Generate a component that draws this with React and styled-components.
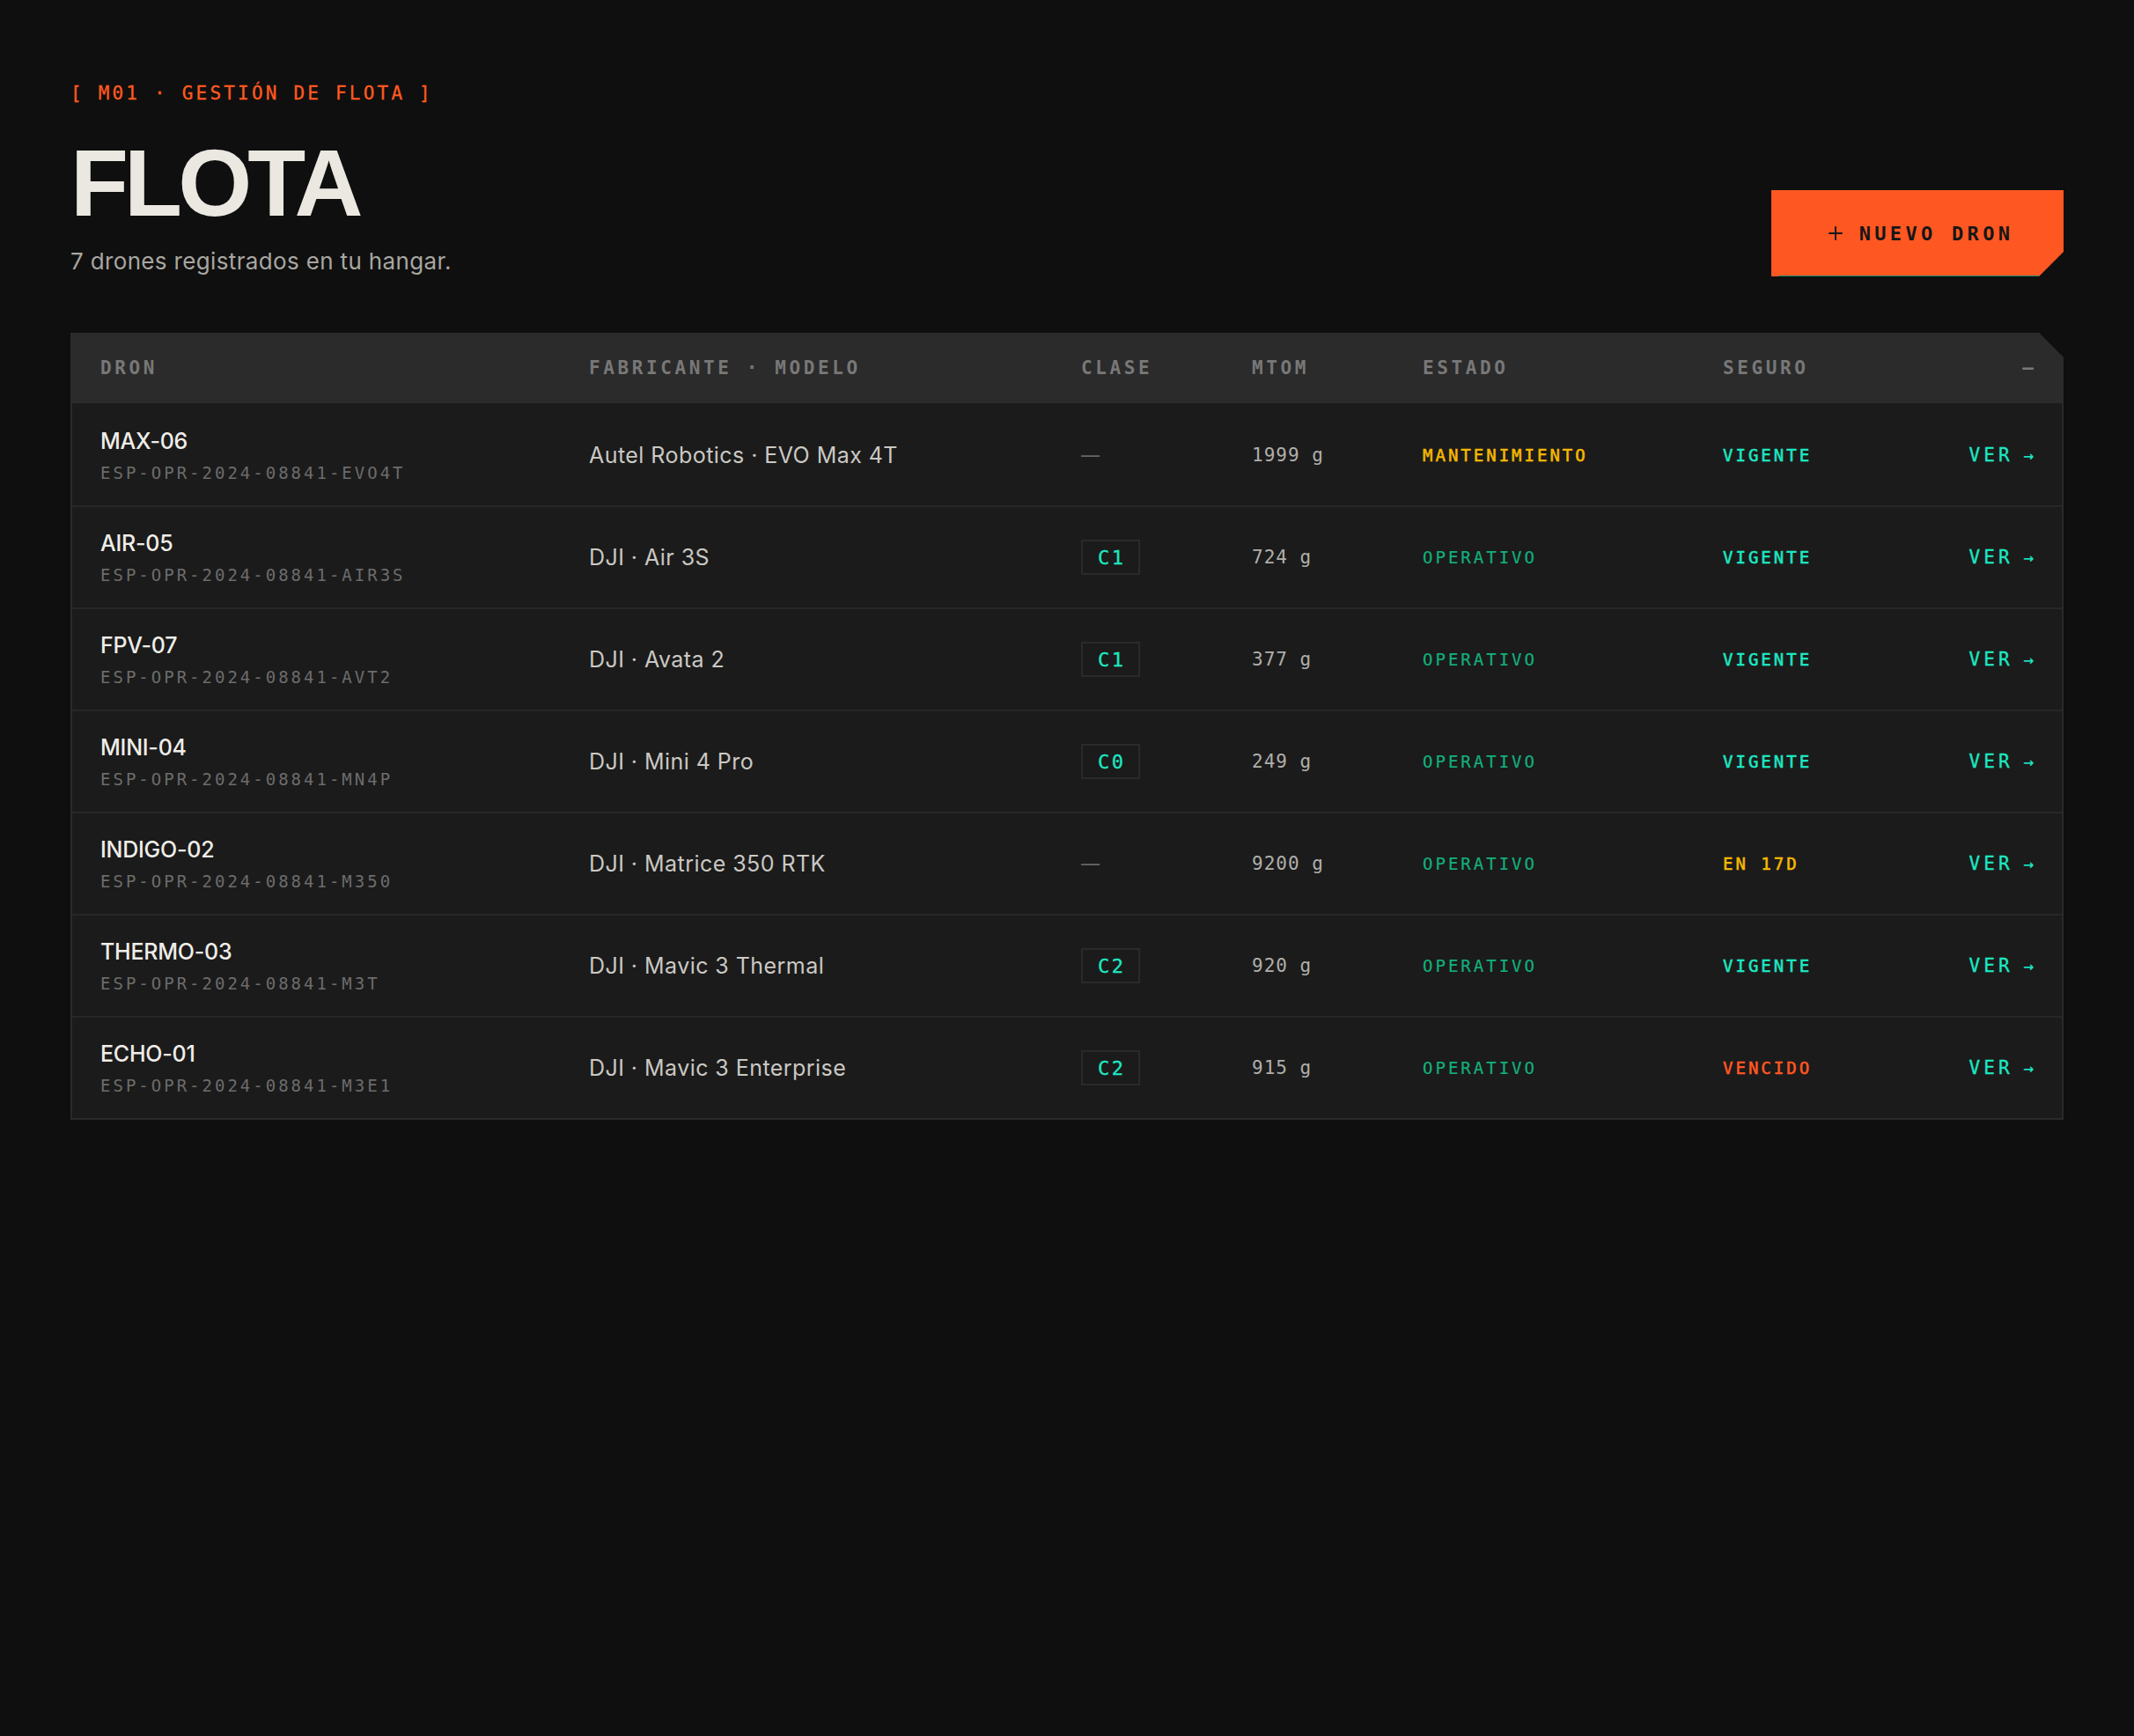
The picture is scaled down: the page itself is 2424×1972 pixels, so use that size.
import React from 'react'
import styled, {createGlobalStyle} from 'styled-components'
import {Plus} from 'lucide-react'

const GlobalStyle = createGlobalStyle`
    html, body {
        margin: 0;
        background: #0f0f0f;
    }
    body {
        min-height: 100vh;
        font-family: Inter, "Liberation Sans", sans-serif;
        -webkit-font-smoothing: antialiased;
    }
`;

const mono = `"DejaVu Sans Mono", "Liberation Mono", monospace`;

// Fleet data
const drones = [
    {name: 'MAX-06', reg: 'ESP-OPR-2024-08841-EVO4T', model: 'Autel Robotics · EVO Max 4T', clase: null, mtom: '1999 g', estado: 'MANTENIMIENTO', seguro: 'VIGENTE'},
    {name: 'AIR-05', reg: 'ESP-OPR-2024-08841-AIR3S', model: 'DJI · Air 3S', clase: 'C1', mtom: '724 g', estado: 'OPERATIVO', seguro: 'VIGENTE'},
    {name: 'FPV-07', reg: 'ESP-OPR-2024-08841-AVT2', model: 'DJI · Avata 2', clase: 'C1', mtom: '377 g', estado: 'OPERATIVO', seguro: 'VIGENTE'},
    {name: 'MINI-04', reg: 'ESP-OPR-2024-08841-MN4P', model: 'DJI · Mini 4 Pro', clase: 'C0', mtom: '249 g', estado: 'OPERATIVO', seguro: 'VIGENTE'},
    {name: 'INDIGO-02', reg: 'ESP-OPR-2024-08841-M350', model: 'DJI · Matrice 350 RTK', clase: null, mtom: '9200 g', estado: 'OPERATIVO', seguro: 'EN 17D'},
    {name: 'THERMO-03', reg: 'ESP-OPR-2024-08841-M3T', model: 'DJI · Mavic 3 Thermal', clase: 'C2', mtom: '920 g', estado: 'OPERATIVO', seguro: 'VIGENTE'},
    {name: 'ECHO-01', reg: 'ESP-OPR-2024-08841-M3E1', model: 'DJI · Mavic 3 Enterprise', clase: 'C2', mtom: '915 g', estado: 'OPERATIVO', seguro: 'VENCIDO'},
]

const estadoColors = {
    MANTENIMIENTO: {color: '#f5b800', strong: true},
    OPERATIVO: {color: '#12b07b', strong: false},
}

const seguroColors = {
    VIGENTE: '#1ce8c2',
    'EN 17D': '#f5b800',
    VENCIDO: '#ff5722',
}

const App = () => {
    return (
        <Page>
            <GlobalStyle/>
            <Header>
                <TitleBlock>
                    <Eyebrow>[ M01 · GESTIÓN DE FLOTA ]</Eyebrow>
                    <Title>FLOTA</Title>
                    <Subtitle>7 drones registrados en tu hangar.</Subtitle>
                </TitleBlock>
                <NewButton>
                    <Plus size={24} strokeWidth={2}/>
                    <span>NUEVO DRON</span>
                </NewButton>
            </Header>

            <Table>
                <HeadRow>
                    <HeadCell>DRON</HeadCell>
                    <HeadCell>FABRICANTE · MODELO</HeadCell>
                    <HeadCell>CLASE</HeadCell>
                    <HeadCell>MTOM</HeadCell>
                    <HeadCell>ESTADO</HeadCell>
                    <HeadCell>SEGURO</HeadCell>
                    <HeadCell $right>—</HeadCell>
                </HeadRow>
                {drones.map(d => (
                    <Row key={d.name}>
                        <DroneCell>
                            <DroneName>{d.name}</DroneName>
                            <DroneReg>{d.reg}</DroneReg>
                        </DroneCell>
                        <Model>{d.model}</Model>
                        <div>
                            {d.clase ? <ClassBadge>{d.clase}</ClassBadge> : <Dash>—</Dash>}
                        </div>
                        <Mtom>{d.mtom}</Mtom>
                        <Status $color={estadoColors[d.estado].color} $strong={estadoColors[d.estado].strong}>
                            {d.estado}
                        </Status>
                        <Status $color={seguroColors[d.seguro]} $strong>{d.seguro}</Status>
                        <ViewLink>VER<Arrow>→</Arrow></ViewLink>
                    </Row>
                ))}
            </Table>
        </Page>
    )
}

const Page = styled.div`
    padding: 96px 80px 120px;
    box-sizing: border-box;
`;

const Header = styled.header`
    display: flex;
    justify-content: space-between;
    align-items: flex-end;
    margin-bottom: 63px;
`;

const TitleBlock = styled.div`
    display: flex;
    flex-direction: column;
`;

const Eyebrow = styled.div`
    font-family: ${mono};
    font-size: 21px;
    line-height: 21px;
    letter-spacing: 3.2px;
    color: #ff5a1f;
    -webkit-text-stroke: 0.3px #ff5a1f;
`;

const Title = styled.h1`
    margin: 37px 0 0;
    font-family: "Liberation Sans", Arial, sans-serif;
    font-weight: 700;
    font-size: 108px;
    line-height: 108px;
    letter-spacing: -0.045em;
    color: #ebe8e1;
`;

const Subtitle = styled.p`
    margin: 17px 0 0;
    font-size: 26px;
    line-height: 36px;
    letter-spacing: 0.35px;
    color: #a8a6a1;
`;

const NewButton = styled.button`
    position: relative;
    display: flex;
    align-items: center;
    justify-content: center;
    gap: 15px;
    width: 332px;
    height: 98px;
    margin-bottom: 1px;
    border: none;
    background: #ff5722;
    color: #161616;
    font-family: ${mono};
    font-weight: 700;
    font-size: 22px;
    letter-spacing: 4.3px;
    cursor: pointer;
    clip-path: polygon(0 0, 100% 0, 100% calc(100% - 28px), calc(100% - 28px) 100%, 0 100%);

    span {
        margin-right: -4px;
    }

    &::after {
        content: '';
        position: absolute;
        left: 8px;
        right: 28px;
        bottom: 0;
        height: 1px;
        background: #138a6c;
    }
`;

const Table = styled.div`
    border: 2px solid #2a2a2a;
    background: #1b1b1b;
    clip-path: polygon(0 0, calc(100% - 28px) 0, 100% 28px, 100% 100%, 0 100%);
`;

const gridCols = `555px 559px 194px 194px 341px 1fr auto`;

const HeadRow = styled.div`
    display: grid;
    grid-template-columns: ${gridCols};
    align-items: center;
    height: 80px;
    margin: -2px -2px 0;
    padding: 0 34px;
    background: #2b2b2b;
`;

const HeadCell = styled.div`
    font-family: ${mono};
    font-weight: 700;
    font-size: 21px;
    letter-spacing: 3.6px;
    color: #787878;
    text-align: ${p => p.$right ? 'right' : 'left'};
    margin-right: ${p => p.$right ? '-3.6px' : '0'};
`;

const Row = styled.div`
    display: grid;
    grid-template-columns: ${gridCols};
    align-items: center;
    height: 114px;
    padding: 0 32px;
    border-top: 2px solid #272727;

    &:nth-child(2) {
        border-top-color: transparent;
    }
`;

const DroneCell = styled.div`
    display: flex;
    flex-direction: column;
    gap: 10px;
`;

const DroneName = styled.div`
    font-size: 25px;
    line-height: 30px;
    font-weight: 500;
    letter-spacing: -0.01em;
    color: #efede8;
`;

const DroneReg = styled.div`
    font-family: ${mono};
    font-size: 19px;
    line-height: 22px;
    letter-spacing: 3px;
    color: #6c6c6c;
`;

const Model = styled.div`
    font-size: 25px;
    line-height: 30px;
    letter-spacing: 0.45px;
    color: #cac8c3;
`;

const ClassBadge = styled.span`
    display: inline-flex;
    align-items: center;
    box-sizing: border-box;
    height: 40px;
    padding: 0 14px 0 17px;
    border: 2px solid #2a2a2a;
    font-family: ${mono};
    font-size: 22px;
    letter-spacing: 2.5px;
    color: #1ce8c2;
    -webkit-text-stroke: 0.3px #1ce8c2;
`;

const Dash = styled.span`
    font-family: Inter, sans-serif;
    font-size: 21px;
    color: #666;
`;

const Mtom = styled.div`
    font-family: ${mono};
    font-size: 21px;
    letter-spacing: 1px;
    color: #b0aeaa;
`;

const Status = styled.div`
    font-family: ${mono};
    font-size: 19px;
    letter-spacing: 3px;
    color: ${p => p.$color};
    -webkit-text-stroke: ${p => p.$strong ? '0.55px' : '0.2px'} ${p => p.$color};
`;

const ViewLink = styled.a`
    display: flex;
    align-items: center;
    font-family: ${mono};
    font-size: 21px;
    letter-spacing: 4px;
    color: #1ce8c2;
    -webkit-text-stroke: 0.3px #1ce8c2;
    cursor: pointer;
`;

const Arrow = styled.span`
    margin-left: 12px;
    font-size: 19px;
    letter-spacing: 0;
`;

export default App
